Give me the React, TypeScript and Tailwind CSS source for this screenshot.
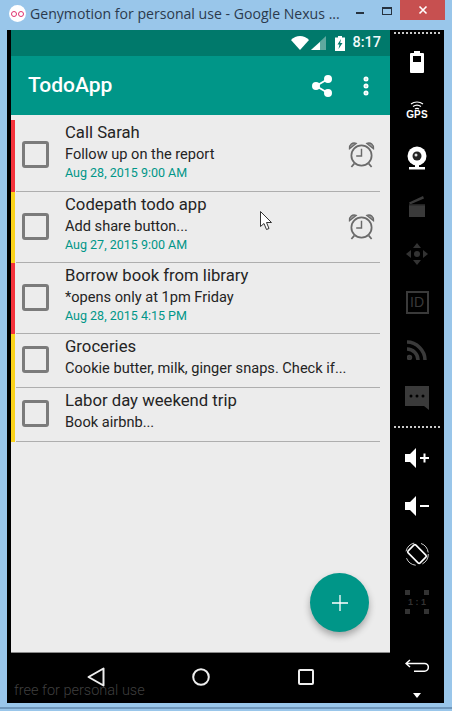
import { MoreVertical, Share2 } from "lucide-react";

const todos = [
  { title: "Call Sarah", note: "Follow up on the report", date: "Aug 28, 2015 9:00 AM", alarm: true, color: "bg-[#f4333c]", height: "h-[72px]" },
  { title: "Codepath todo app", note: "Add share button...", date: "Aug 27, 2015 9:00 AM", alarm: true, color: "bg-[#fbd31b]", height: "h-[71px]" },
  { title: "Borrow book from library", note: "*opens only at 1pm Friday", date: "Aug 28, 2015 4:15 PM", alarm: false, color: "bg-[#f4333c]", height: "h-[71px]" },
  { title: "Groceries", note: "Cookie butter, milk, ginger snaps. Check if...", date: "", alarm: false, color: "bg-[#fbd31b]", height: "h-[54px]" },
  { title: "Labor day weekend trip", note: "Book airbnb...", date: "", alarm: false, color: "bg-[#fbd31b]", height: "h-[54px]" },
];

function AlarmIcon() {
  return (
    <svg width="27" height="27" viewBox="0 0 28 28" fill="none" stroke="#6a6a6a">
      <circle cx="14" cy="15" r="10.500" strokeWidth="1.800" />
      <path d="M14 8v7.500H8.500" strokeWidth="1.500" />
      <path d="M1.500 8c-.5-4 3-7 7-5.500zM26.500 8c.5-4-3-7-7-5.500z" fill="#9a9a9a" strokeWidth="1.300" />
      <path d="M6.500 23.500L3.500 27M21.500 23.500l3 3.500" strokeWidth="1.800" />
    </svg>
  );
}

function TodoRow({ todo }: { todo: (typeof todos)[number] }) {
  return (
    <div className={`flex ${todo.height}`}>
      <div className={`w-[4px] shrink-0 ${todo.color}`} />
      <div className="ml-px mr-[10px] flex flex-1 items-center border-b border-[#aeaeae]">
        <div className="ml-[6px] mt-[-2px] h-[27px] w-[27px] shrink-0 rounded-[3px] border-[3px] border-[#7b7b7b]" />
        <div className="ml-[16px] flex-1 self-start pt-[2px]">
          <div className="text-[16.700px] leading-[21px] text-[#242424]">{todo.title}</div>
          <div className="mt-[1px] text-[14.600px] leading-[20px] text-[#242424]">{todo.note}</div>
          {todo.date && <div className="mt-[-1px] text-[12.500px] leading-[19px] text-[#009688]">{todo.date}</div>}
        </div>
        {todo.alarm && (
          <div className="mr-[5px] mt-[-2px]">
            <AlarmIcon />
          </div>
        )}
      </div>
    </div>
  );
}

function RailSlot({ children, h = "h-[48px]" }: { children: React.ReactNode; h?: string }) {
  return <div className={`flex w-full items-center justify-center ${h}`}>{children}</div>;
}

function DottedLine() {
  return <div className="mx-[4px] h-[2px] border-t-2 border-dotted border-[#c9c9c9]" />;
}

function SideRail() {
  return (
    <div className="flex w-[54px] shrink-0 flex-col bg-black pt-[2px] font-['Liberation_Sans',sans-serif]">
      <DottedLine />
      <div className="mt-[4px]">
        <RailSlot>
          <svg width="14" height="22" viewBox="0 0 14 22">
            <path d="M4 0h6v2h3a1 1 0 0 1 1 1v18a1 1 0 0 1-1 1H1a1 1 0 0 1-1-1V3a1 1 0 0 1 1-1h3z" fill="#fff" />
            <rect x="3" y="5" width="8" height="6" fill="#000" />
          </svg>
        </RailSlot>
        <RailSlot>
          <div className="flex flex-col items-center">
            <svg width="14" height="9" viewBox="0 0 14 9" fill="none" stroke="#fff" strokeWidth="1.200">
              <path d="M1 3c3.500-2.700 8.500-2.700 12 0M3 5.500c2.500-1.800 5.500-1.800 8 0M5 8c1.200-.8 2.800-.8 4 0" />
            </svg>
            <span className="text-[10px] font-bold leading-[10px] tracking-[0.2px] text-white">GPS</span>
          </div>
        </RailSlot>
        <RailSlot>
          <svg width="20" height="24" viewBox="0 0 20 24">
            <circle cx="10" cy="10" r="9.500" fill="#fff" />
            <circle cx="10" cy="10" r="4.500" fill="#222" />
            <circle cx="9" cy="9" r="1.500" fill="#ddd" />
            <path d="M8 19h4v2h6v2.500H2V21h6z" fill="#fff" />
          </svg>
        </RailSlot>
        <RailSlot>
          <svg width="18" height="22" viewBox="0 0 18 22" fill="#3a3a3a">
            <rect x="1" y="10" width="16" height="12" />
            <path d="M1 7.500L15 1l1 2.500L2 9.500z" />
            <path d="M1 9h16v1.500H1z" fill="#222" />
          </svg>
        </RailSlot>
        <RailSlot>
          <svg width="24" height="24" viewBox="0 0 24 24" fill="#333">
            <circle cx="12" cy="12" r="3" />
            <path d="M12 1l4 5H8zM12 23l-4-5h8zM1 12l5-4v8zM23 12l-5 4V8z" />
          </svg>
        </RailSlot>
        <RailSlot>
          <div className="flex h-[23px] w-[23px] items-center justify-center border-2 border-[#3a3a3a] text-[14px] leading-none text-[#3a3a3a]">ID</div>
        </RailSlot>
        <RailSlot>
          <svg width="20" height="20" viewBox="0 0 20 20" fill="none" stroke="#3a3a3a" strokeWidth="3.500">
            <path d="M0 2c9.500 0 18 8.500 18 18M0 9c6 0 11 5 11 11" />
            <circle cx="2.500" cy="17.500" r="1" fill="#3a3a3a" />
          </svg>
        </RailSlot>
        <RailSlot>
          <svg width="24" height="24" viewBox="0 0 24 24">
            <path d="M0 0h24v24l-5-4H0z" fill="#3a3a3a" />
            <circle cx="6" cy="10" r="1.500" fill="#000" />
            <circle cx="12" cy="10" r="1.500" fill="#000" />
            <circle cx="18" cy="10" r="1.500" fill="#000" />
          </svg>
        </RailSlot>
      </div>
      <div className="mt-[4px]">
        <DottedLine />
      </div>
      <div className="mt-[6px]">
        <RailSlot>
          <svg width="25" height="20" viewBox="0 0 25 20" fill="#fff">
            <path d="M0 6h5l6-6v20l-6-6H0z" />
            <path d="M15 9h3.500V5.500h2V9H24v2h-3.500v3.500h-2V11H15z" />
          </svg>
        </RailSlot>
        <RailSlot>
          <svg width="25" height="20" viewBox="0 0 25 20" fill="#fff">
            <path d="M0 6h5l6-6v20l-6-6H0z" />
            <path d="M15 9h9v2h-9z" />
          </svg>
        </RailSlot>
        <RailSlot>
          <svg width="24" height="24" viewBox="0 0 24 24" fill="none" stroke="#fff">
            <rect x="6.500" y="3.500" width="11" height="17" rx="1.500" transform="rotate(-45 12 12)" strokeWidth="1.600" />
            <circle cx="12" cy="12" r="11.300" strokeWidth="0.800" strokeDasharray="12 7" />
          </svg>
        </RailSlot>
        <RailSlot>
          <div className="relative flex h-[24px] w-[24px] items-center justify-center text-[9px] font-bold leading-none text-[#333]">
            1 : 1
            <span className="absolute left-0 top-0 h-[5px] w-[5px] bg-[#333]" />
            <span className="absolute right-0 top-0 h-[5px] w-[5px] bg-[#333]" />
            <span className="absolute bottom-0 left-0 h-[5px] w-[5px] bg-[#333]" />
            <span className="absolute bottom-0 right-0 h-[5px] w-[5px] bg-[#333]" />
          </div>
        </RailSlot>
      </div>
      <div className="mt-[16px]">
        <RailSlot h="h-[48px]">
          <svg width="24" height="14" viewBox="0 0 24 14" fill="none" stroke="#fff" strokeWidth="1.500">
            <path d="M5 1L1 4.500 5 8M1 4.500h18.500a3.800 3.800 0 0 1 0 7.700H9" />
          </svg>
        </RailSlot>
      </div>
      <div className="mt-[3px] flex justify-center">
        <svg width="8" height="5" viewBox="0 0 8 5" fill="#fff">
          <path d="M0 0h8L4 5z" />
        </svg>
      </div>
    </div>
  );
}

export default function App() {
  return (
    <div className="relative h-[711px] w-[452px] overflow-hidden bg-[#99c6ea] font-['Roboto',sans-serif]">
      {/* window title bar */}
      <div className="flex h-[30px] items-start">
        <div className="ml-[9px] mt-[5px] flex h-[17px] w-[17px] items-center justify-center gap-[1px] rounded-full bg-white">
          <span className="h-[6px] w-[6px] rounded-full border border-[#e0336f]" />
          <span className="h-[6px] w-[6px] rounded-full border border-[#e0336f]" />
        </div>
        <span className="ml-[4px] mt-[4px] w-[320px] whitespace-nowrap font-['Open_Sans',sans-serif] text-[14.100px] leading-[20px] text-[#2b3a4d]">
          Genymotion for personal use - Google Nexus ...
        </span>
        <div className="ml-[6px] mt-[12px] h-[2px] w-[8px] bg-[#26323f]" />
        <div className="ml-[18px] mt-[7px] h-[8px] w-[10px] border border-t-2 border-[#26323f]" />
        <div className="ml-[8px] flex h-[20px] w-[45px] items-center justify-center bg-[#c75050] text-white">
          <svg width="10" height="10" viewBox="0 0 10 10" stroke="#fff" strokeWidth="1.600">
            <path d="M1.500 1.500l7 7M8.500 1.500l-7 7" />
          </svg>
        </div>
      </div>

      <div className="flex h-[673px] pl-[7px] pr-[8px]">
        <div className="w-[4px] shrink-0 bg-black" />
        <div className="flex w-[379px] shrink-0 flex-col">
          {/* status bar */}
          <div className="flex h-[26px] items-center justify-end bg-[#00796b] pr-[9px]">
            <svg width="18" height="14" viewBox="0 0 18 14" fill="#fff">
              <path d="M0 4c5-5.300 13-5.300 18 0L9 14z" />
            </svg>
            <svg className="ml-[2px]" width="15" height="14" viewBox="0 0 15 14">
              <path d="M15 0v14H0z" fill="#5fa99f" />
              <path d="M9 6v8H0z" fill="#fff" />
            </svg>
            <svg className="ml-[9px]" width="10" height="15" viewBox="0 0 10 15">
              <path d="M3 0h4v1.500h3V15H0V1.500h3z" fill="#fff" />
              <path d="M6 3L2.500 8.500h2L3.500 13 7.500 7H5.200z" fill="#00796b" />
            </svg>
            <span className="ml-[7px] text-[14.500px] font-medium leading-none text-[#f2fafa]">8:17</span>
          </div>
          {/* app bar */}
          <div className="flex h-[59px] items-center bg-[#009688] pl-[17px] text-white">
            <span className="w-[83px] whitespace-nowrap text-[21px] font-medium">TodoApp</span>
            <Share2 className="ml-[199px] h-[24px] w-[24px] fill-white stroke-white" strokeWidth={2} />
            <MoreVertical className="ml-[20px] h-[24px] w-[24px]" strokeWidth={3} />
          </div>
          {/* list */}
          <div className="flex-1 bg-[#ececec] pt-[5px]">
            {todos.map((todo) => (
              <TodoRow key={todo.title} todo={todo} />
            ))}
          </div>
          {/* nav bar */}
          <div className="flex h-[51px] shrink-0 items-center border-t border-[#8a8a8a] bg-black pb-[3px]">
            <svg className="ml-[76px]" width="18" height="20" viewBox="0 0 18 20" fill="none" stroke="#eee" strokeWidth="2">
              <path d="M16.500 1.500v17L1.500 10z" strokeLinejoin="round" />
            </svg>
            <svg className="ml-[87px]" width="18" height="18" viewBox="0 0 18 18" fill="none" stroke="#eee" strokeWidth="2">
              <circle cx="9" cy="9" r="7.800" />
            </svg>
            <svg className="ml-[88px]" width="16" height="16" viewBox="0 0 16 16" fill="none" stroke="#eee" strokeWidth="2">
              <rect x="1" y="1" width="14" height="14" rx="1" />
            </svg>
          </div>
        </div>
        <SideRail />
      </div>

      <div className="h-[6px] border-b-2 border-[#6f97bb]" />

      {/* floating add button */}
      <div className="absolute left-[310px] top-[573px] flex h-[59px] w-[59px] items-center justify-center rounded-full bg-[#009688] shadow-[0_4px_7px_rgba(0,0,0,0.3)]">
        <svg width="18" height="18" viewBox="0 0 18 18" stroke="#fff" strokeWidth="1.300">
          <path d="M9 1v16M1 9h16" />
        </svg>
      </div>

      {/* mouse pointer */}
      <svg className="absolute left-[260px] top-[211px]" width="14" height="20" viewBox="0 0 14 20" fill="#fff" stroke="#333">
        <path d="M.5.500v15l3.500-3 2.500 6 2.500-1-2.500-6h5z" />
      </svg>

      {/* watermark */}
      <span className="absolute left-[14px] top-[682px] text-[14.500px] font-light leading-[17px] text-[#3f3f3f]">free for personal use</span>
    </div>
  );
}
